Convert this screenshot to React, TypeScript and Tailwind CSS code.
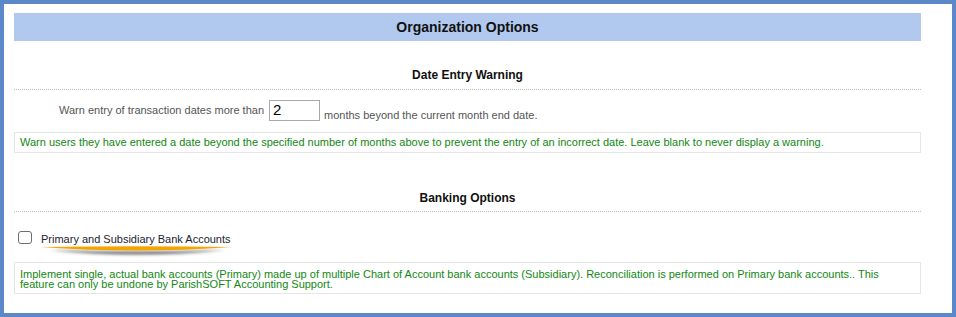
import React from "react";

export default function App() {
  const font = { fontFamily: '"Liberation Sans", Arial, sans-serif' };
  return (
    <div className="w-[956px] h-[317px] bg-white" style={font}>
      <div className="w-full h-full border-4 border-[#5b88c8] bg-white pl-[10px] pr-[31px] pt-[9px]">
        {/* Header bar */}
        <div className="h-[28px] bg-[#b1c9ee] flex items-center justify-center">
          <span className="text-[14px] font-bold text-[#111]">Organization Options</span>
        </div>

        {/* Date Entry Warning */}
        <div className="mt-[26px] border-b border-dotted border-[#bdbdbd] pb-[6px] text-center text-[12px] leading-[16px] font-bold text-[#111]">
          Date Entry Warning
        </div>

        <div className="mt-[10px] flex items-stretch h-[21px] pl-[45px] text-[11px]">
          <span className="self-center text-[#555] leading-[13px]">Warn entry of transaction dates more than</span>
          <input
            type="text"
            defaultValue="2"
            readOnly
            className="ml-[5px] w-[51px] h-[21px] border border-[#a9a9a9] px-[3px] text-[15px] text-black outline-none"
            style={font}
          />
          <span className="self-end ml-[4px] text-[#555] leading-[13px] translate-y-[1px]">
            months beyond the current month end date.
          </span>
        </div>

        <div className="mt-[11px] h-[21px] border border-[#e6e6e6] px-[5px] flex items-center text-[11px] text-[#118811]">
          Warn users they have entered a date beyond the specified number of months above to prevent the entry of an incorrect date. Leave blank to never display a warning.
        </div>

        {/* Banking Options */}
        <div className="mt-[37px] border-b border-dotted border-[#bdbdbd] pb-[5px] text-center text-[12px] leading-[16px] font-bold text-[#111]">
          Banking Options
        </div>

        <div className="mt-[19px] flex items-start pl-[4px] h-[14px]">
          <input
            type="checkbox"
            className="appearance-none m-0 w-[14px] h-[13px] border border-[#6e6e6e] rounded-[3px] bg-white"
          />
          <div className="relative ml-[9px] mt-[2px] text-[11px] leading-[13px] text-[#1c1c2e]">
            Primary and Subsidiary Bank Accounts
            <svg
              className="absolute left-[-2px] top-[11px]"
              width="196"
              height="18"
              viewBox="0 0 196 18"
            >
              <defs>
                <filter id="sh" x="-10%" y="-100%" width="120%" height="300%">
                  <feGaussianBlur stdDeviation="1.6" />
                </filter>
              </defs>
              <path
                d="M10 6 Q98 15 186 6 Q98 9 10 6 Z"
                fill="#555"
                opacity="0.9"
                filter="url(#sh)"
              />
              <path d="M1 3 Q98 1.5 193 3 Q98 10 1 3 Z" fill="#f6a500" />
            </svg>
          </div>
        </div>

        <div className="mt-[17px] h-[32px] border border-[#e6e6e6] px-[5px] pt-[6px] text-[11px] leading-[10px] text-[#118811]">
          Implement single, actual bank accounts (Primary) made up of multiple Chart of Account bank accounts (Subsidiary). Reconciliation is performed on Primary bank accounts.. This feature can only be undone by ParishSOFT Accounting Support.
        </div>
      </div>
    </div>
  );
}
